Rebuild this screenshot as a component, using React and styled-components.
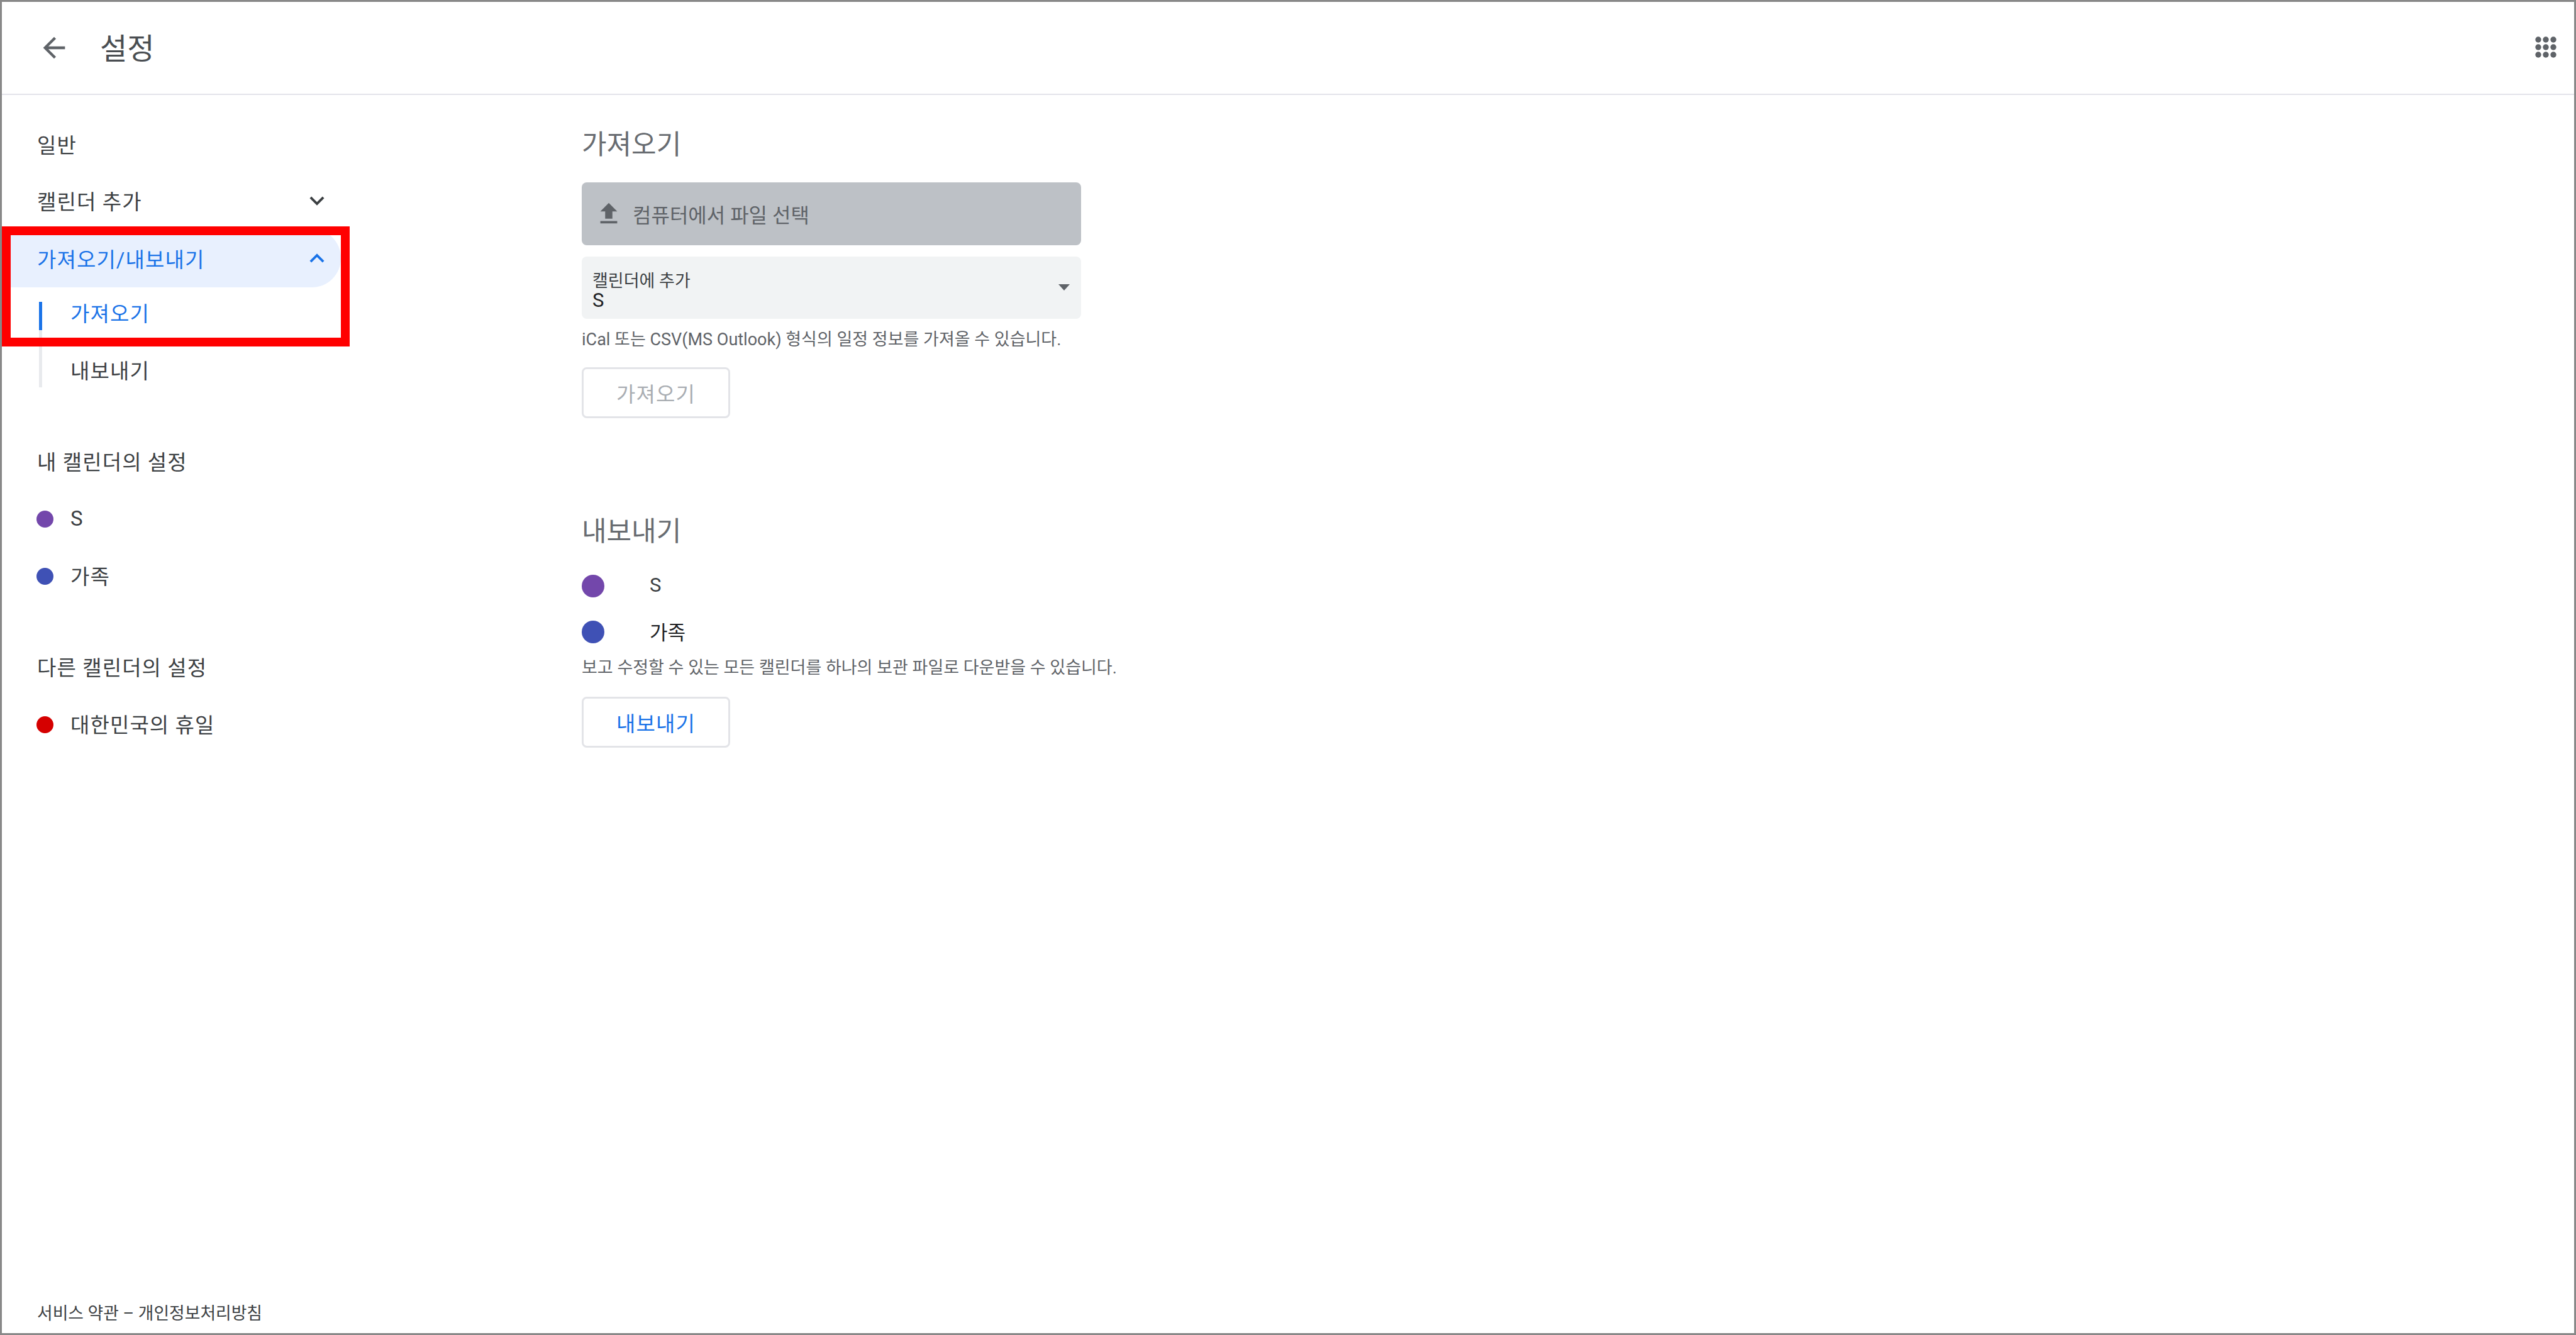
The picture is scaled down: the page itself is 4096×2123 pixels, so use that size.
import React from 'react';
import styled, { createGlobalStyle } from 'styled-components';
import { MdArrowBack, MdFileUpload, MdKeyboardArrowDown, MdKeyboardArrowUp } from 'react-icons/md';

const GlobalStyle = createGlobalStyle`
  html, body {
    margin: 0;
    padding: 0;
    background: #fff;
  }
  body {
    font-family: Roboto, "Noto Sans CJK KR", sans-serif;
  }
`;

const Frame = styled.div`
  position: relative;
  box-sizing: border-box;
  width: 100vw;
  height: 100vh;
  display: flex;
  flex-direction: column;
  border: 3px solid #888;
  background: #fff;
  overflow: hidden;
`;

const Header = styled.header`
  flex: none;
  height: 146px;
  display: flex;
  align-items: center;
  padding: 0 26px 0 57px;
  border-bottom: 2px solid #e3e3ea;
`;

const BackIcon = styled(MdArrowBack)`
  flex: none;
  font-size: 52px;
  color: #5f6368;
`;

const Title = styled.h1`
  margin: 0 0 6px 47px;
  font-size: 47px;
  font-weight: 400;
  color: #4a4e52;
`;

const AppsIcon = styled.svg`
  margin-left: auto;
  width: 36px;
  height: 36px;
  fill: #5f6368;
`;

const Body = styled.div`
  flex: 1;
  display: grid;
  grid-template-columns: 539px 1fr;
  min-height: 0;
`;

const Sidebar = styled.nav`
  display: flex;
  flex-direction: column;
  padding-top: 33px;
  color: #3c4043;
  font-size: 33px;
  letter-spacing: 1.1px;
`;

const NavRow = styled.div`
  box-sizing: border-box;
  height: ${(p) => (p.$active ? 93 : 90)}px;
  padding: ${(p) => (p.$active ? '2px' : '0')} 15px ${(p) => (p.$active ? 1 : 0)}px 56px;
  display: flex;
  align-items: center;
  justify-content: space-between;
  color: ${(p) => (p.$active ? '#1a73e8' : '#3c4043')};
  background: ${(p) => (p.$active ? '#e8f0fe' : 'transparent')};
  border-radius: 0 46px 46px 0;
  svg {
    font-size: 46px;
  }
`;

const SubList = styled.div`
  box-sizing: border-box;
  height: 136px;
  margin: 23px 0 0 59px;
  padding: 1px 0 0 45px;
  display: flex;
  flex-direction: column;
  gap: 53px;
  border-left: 5px solid #e8eaed;
`;

const SubItem = styled.div`
  position: relative;
  line-height: 38px;
  color: ${(p) => (p.$active ? '#1a73e8' : '#3c4043')};
  ${(p) =>
    p.$active &&
    `
    &::before {
      content: '';
      position: absolute;
      left: -50px;
      top: -1px;
      width: 5px;
      height: 45px;
      background: #1a73e8;
    }
  `}
`;

const SectionLabel = styled.div`
  height: 90px;
  margin-top: ${(p) => p.$top}px;
  padding-left: 56px;
  display: flex;
  align-items: center;
`;

const CalendarRow = styled.div`
  height: 90px;
  padding: 1px 0 0 55px;
  display: flex;
  align-items: center;
  gap: 27px;
`;

const Dot = styled.span`
  flex: none;
  width: ${(p) => p.$size}px;
  height: ${(p) => p.$size}px;
  margin-top: 2px;
  border-radius: 50%;
  background: ${(p) => p.$color};
`;

const Footer = styled.div`
  margin-top: auto;
  padding: 0 0 13px 56px;
  font-size: 26.8px;
  letter-spacing: 0;
  line-height: 36px;
  color: #3c4043;
  white-space: nowrap;
`;

const Main = styled.main`
  padding: 54px 0 0 383px;
`;

const Heading = styled.h2`
  margin: ${(p) => p.$top || 0}px 0 0;
  font-size: 43px;
  line-height: 50px;
  font-weight: 400;
  color: #686c71;
`;

const UploadButton = styled.div`
  box-sizing: border-box;
  width: 794px;
  height: 100px;
  margin-top: 35px;
  padding-left: 20px;
  display: flex;
  align-items: center;
  gap: 15px;
  border-radius: 8px;
  background: #bdc1c6;
  color: #5f6368;
  font-size: 32px;
  svg {
    font-size: 46px;
  }
`;

const Select = styled.div`
  position: relative;
  box-sizing: border-box;
  width: 794px;
  height: 99px;
  margin-top: 18px;
  padding: 24px 0 0 17px;
  border-radius: 8px;
  background: #f1f3f4;
`;

const SelectLabel = styled.div`
  font-size: 27px;
  line-height: 31px;
  color: #3c4043;
`;

const SelectValue = styled.div`
  font-size: 31px;
  line-height: 30px;
  color: #202124;
`;

const SelectArrow = styled.span`
  position: absolute;
  right: 18px;
  top: 44px;
  border-left: 9px solid transparent;
  border-right: 9px solid transparent;
  border-top: 10px solid #5f6368;
`;

const Helper = styled.p`
  margin: ${(p) => p.$top}px 0 0;
  font-size: 27px;
  line-height: 36px;
  color: #5f6368;
  white-space: nowrap;
`;

const OutlineButton = styled.div`
  box-sizing: border-box;
  width: 236px;
  height: 81px;
  margin-top: ${(p) => p.$top}px;
  display: flex;
  align-items: center;
  justify-content: center;
  border: 3px solid #e3e4e8;
  border-radius: 8px;
  font-size: 33px;
  letter-spacing: 1.1px;
  color: ${(p) => (p.$disabled ? '#a9adb2' : '#1a73e8')};
`;

const ExportRow = styled.div`
  height: 73px;
  margin-top: ${(p) => p.$top || 0}px;
  display: flex;
  align-items: center;
  gap: 72px;
  font-size: 31px;
  color: ${(p) => p.$color};
`;

const RedBox = styled.div`
  position: absolute;
  left: 0;
  top: 357px;
  box-sizing: border-box;
  width: 553px;
  height: 191px;
  border: 14px solid #ff0000;
  pointer-events: none;
`;

const dots = [6, 18, 30];

export default function App() {
  return (
    <>
      <GlobalStyle />
      <Frame>
        <Header>
          <BackIcon />
          <Title>설정</Title>
          <AppsIcon viewBox="0 0 36 36">
            {dots.map((cy) =>
              dots.map((cx) => <circle key={`${cx}-${cy}`} cx={cx - 1} cy={cy - 1} r="4.7" />)
            )}
          </AppsIcon>
        </Header>
        <Body>
          <Sidebar>
            <NavRow>일반</NavRow>
            <NavRow>
              캘린더 추가
              <MdKeyboardArrowDown />
            </NavRow>
            <NavRow $active>
              가져오기/내보내기
              <MdKeyboardArrowUp />
            </NavRow>
            <SubList>
              <SubItem $active>가져오기</SubItem>
              <SubItem>내보내기</SubItem>
            </SubList>
            <SectionLabel $top={72}>내 캘린더의 설정</SectionLabel>
            <CalendarRow>
              <Dot $size={27} $color="#7347ab" />S
            </CalendarRow>
            <CalendarRow>
              <Dot $size={27} $color="#3f51b5" />가족
            </CalendarRow>
            <SectionLabel $top={55}>다른 캘린더의 설정</SectionLabel>
            <CalendarRow>
              <Dot $size={27} $color="#d50000" />대한민국의 휴일
            </CalendarRow>
            <Footer>서비스 약관 – 개인정보처리방침</Footer>
          </Sidebar>
          <Main>
            <Heading>가져오기</Heading>
            <UploadButton>
              <MdFileUpload />
              컴퓨터에서 파일 선택
            </UploadButton>
            <Select>
              <SelectLabel>캘린더에 추가</SelectLabel>
              <SelectValue>S</SelectValue>
              <SelectArrow />
            </Select>
            <Helper $top={15}>iCal 또는 CSV(MS Outlook) 형식의 일정 정보를 가져올 수 있습니다.</Helper>
            <OutlineButton $disabled $top={26}>가져오기</OutlineButton>
            <Heading $top={155}>내보내기</Heading>
            <ExportRow $top={24} $color="#3c4043">
              <Dot $size={36} $color="#7347ab" />S
            </ExportRow>
            <ExportRow $color="#202124">
              <Dot $size={36} $color="#3f51b5" />가족
            </ExportRow>
            <Helper $top={4}>보고 수정할 수 있는 모든 캘린더를 하나의 보관 파일로 다운받을 수 있습니다.</Helper>
            <OutlineButton $top={28}>내보내기</OutlineButton>
          </Main>
        </Body>
        <RedBox />
      </Frame>
    </>
  );
}
